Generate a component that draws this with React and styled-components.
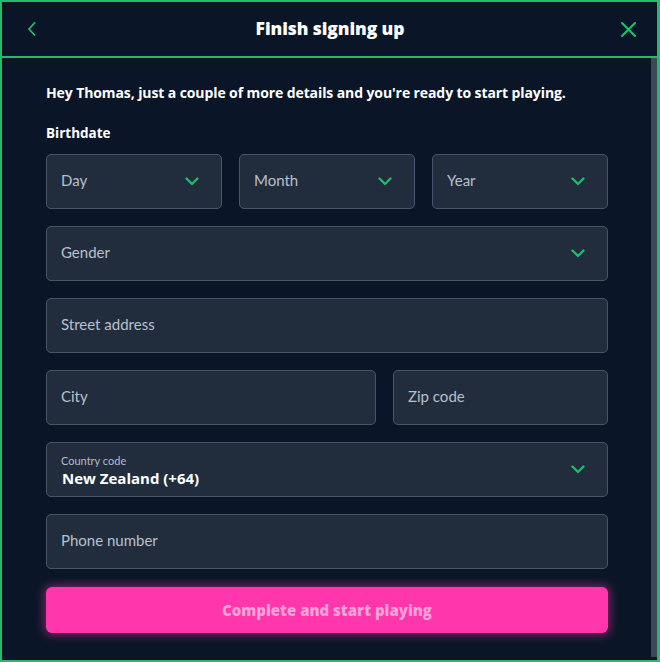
import React from "react";
import styled, { createGlobalStyle } from "styled-components";

const Global = createGlobalStyle`
  html, body { margin: 0; padding: 0; background: #0a1628; }
  body { font-family: Lato, "Noto Sans", sans-serif; }
  * { box-sizing: border-box; }
`;

const Frame = styled.div`
  width: 660px;
  height: 662px;
  border: 2px solid #22bd6c;
  border-right-width: 3px;
  background: #0a1628;
  display: flex;
  flex-direction: column;
  overflow: hidden;
`;

const Header = styled.header`
  height: 56px;
  flex: none;
  border-bottom: 2px solid #22bd6c;
  display: flex;
  align-items: center;
  justify-content: space-between;
  padding: 0 20px 0 21px;
  background: #0a1628;
`;

const Title = styled.h1`
  margin: 0 0 3px;
  font-family: "Open Sans", Lato, sans-serif;
  font-size: 17.5px;
  font-weight: 800;
  color: #ffffff;
  letter-spacing: -0.1px;
`;

const IconBtn = styled.button`
  background: none;
  border: none;
  padding: 0;
  width: 18px;
  height: 18px;
  display: flex;
  align-items: center;
  justify-content: center;
  cursor: pointer;
`;

const Body = styled.div`
  flex: 1;
  display: flex;
  min-height: 0;
`;

const Content = styled.main`
  flex: 1;
  padding: 25px 43px 0 44px;
  display: flex;
  flex-direction: column;
`;

const Scrollbar = styled.div`
  width: 6px;
  flex: none;
  background: #3a4859;
  margin-bottom: 3px;
`;

const Intro = styled.p`
  margin: 0 0 22px;
  font-family: "Open Sans", Lato, sans-serif;
  font-size: 14px;
  line-height: 19px;
  font-weight: 700;
  color: #ffffff;
  letter-spacing: -0.1px;
`;

const Label = styled.div`
  font-family: "Open Sans", Lato, sans-serif;
  font-size: 13.5px;
  font-weight: 700;
  color: #ffffff;
  margin-bottom: 12px;
`;

const Row = styled.div`
  display: grid;
  grid-template-columns: ${(p) => p.$cols};
  gap: 17px;
  margin-bottom: 17px;
`;

const Field = styled.div`
  height: 55px;
  background: #212d3d;
  border: 1.5px solid #47566a;
  border-radius: 5px;
  display: flex;
  align-items: center;
  justify-content: space-between;
  padding: 0 22px 0 14px;
`;

const Placeholder = styled.span`
  font-size: 15px;
  color: #b8c0cb;
  margin-top: -3px;
`;

const Stack = styled.div`
  display: flex;
  flex-direction: column;
  padding-top: 3px;
`;

const SmallLabel = styled.span`
  font-size: 11px;
  color: #b4bcc7;
  line-height: 13px;
`;

const Value = styled.span`
  font-family: "Open Sans", Lato, sans-serif;
  font-size: 15px;
  font-weight: 700;
  color: #ffffff;
  line-height: 22px;
  margin-left: 1px;
`;

const Button = styled.button`
  height: 46px;
  margin-top: 1px;
  border: none;
  border-radius: 6px;
  background: #ff36ac;
  color: #f9a2d7;
  font-family: "Open Sans", Lato, sans-serif;
  font-size: 15px;
  font-weight: 800;
  box-shadow: 0 0 10px 2px rgba(255, 54, 172, 0.45);
  cursor: pointer;
`;

const Chevron = () => (
  <svg width="14" height="9" viewBox="0 0 14 9" fill="none">
    <path d="M1.5 1.5 L7 7 L12.5 1.5" stroke="#1fc06c" strokeWidth="2.2" strokeLinecap="round" strokeLinejoin="round" />
  </svg>
);

const Select = ({ children }) => (
  <Field>
    <Placeholder>{children}</Placeholder>
    <Chevron />
  </Field>
);

const Input = ({ children }) => (
  <Field>
    <Placeholder>{children}</Placeholder>
  </Field>
);

export default function App() {
  return (
    <>
      <Global />
      <Frame>
        <Header>
          <IconBtn aria-label="Back">
            <svg width="10" height="16" viewBox="0 0 10 16" fill="none">
              <path d="M7.5 2 L2 8 L7.5 14" stroke="#1fc06c" strokeWidth="1.8" strokeLinecap="round" strokeLinejoin="round" />
            </svg>
          </IconBtn>
          <Title>Finish signing up</Title>
          <IconBtn aria-label="Close">
            <svg width="17" height="17" viewBox="0 0 17 17" fill="none">
              <path d="M2 2 L15 15 M15 2 L2 15" stroke="#1fc06c" strokeWidth="2" strokeLinecap="round" />
            </svg>
          </IconBtn>
        </Header>
        <Body>
          <Content>
            <Intro>Hey Thomas, just a couple of more details and you're ready to start playing.</Intro>
            <Label>Birthdate</Label>
            <Row $cols="1fr 1fr 1fr">
              <Select>Day</Select>
              <Select>Month</Select>
              <Select>Year</Select>
            </Row>
            <Row $cols="1fr">
              <Select>Gender</Select>
            </Row>
            <Row $cols="1fr">
              <Input>Street address</Input>
            </Row>
            <Row $cols="330px 1fr">
              <Input>City</Input>
              <Input>Zip code</Input>
            </Row>
            <Row $cols="1fr">
              <Field>
                <Stack>
                  <SmallLabel>Country code</SmallLabel>
                  <Value>New Zealand (+64)</Value>
                </Stack>
                <Chevron />
              </Field>
            </Row>
            <Row $cols="1fr">
              <Input>Phone number</Input>
            </Row>
            <Button>Complete and start playing</Button>
          </Content>
          <Scrollbar />
        </Body>
      </Frame>
    </>
  );
}
